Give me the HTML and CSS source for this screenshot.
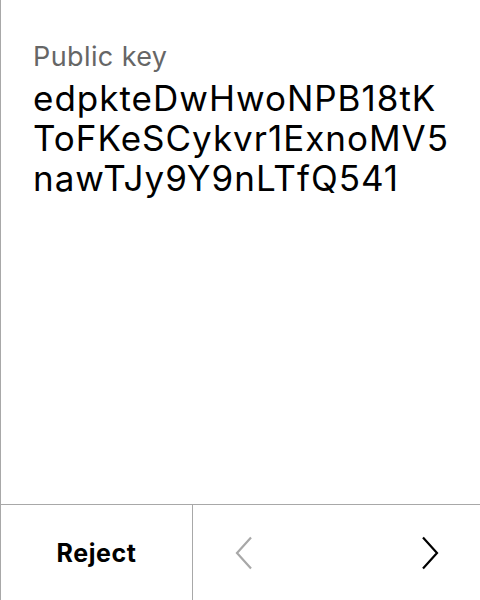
FILE: index.html
```html
<!DOCTYPE html>
<html>
<head>
<meta charset="utf-8">
<link rel="stylesheet" href="styles.css">
</head>
<body>
<div class="screen">
  <div class="content">
    <div class="label">Public key</div>
    <div class="value">edpkteDwHwoNPB18tK<br>ToFKeSCykvr1ExnoMV5<br>nawTJy9Y9nLTfQ541</div>
  </div>
  <div class="footer">
    <div class="reject">Reject</div>
    <div class="nav">
      <svg class="chev prev" width="18" height="34" viewBox="0 0 18 34"><path d="M16 1.5 L2 17 L16 32.5" fill="none" stroke="#a8a8a8" stroke-width="2.2"/></svg>
      <svg class="chev next" width="18" height="34" viewBox="0 0 18 34"><path d="M2 1.5 L16 17 L2 32.5" fill="none" stroke="#000" stroke-width="2.2"/></svg>
    </div>
  </div>
</div>
</body>
</html>
```
FILE: styles.css
```css
html, body {
  margin: 0;
  padding: 0;
  background: #fff;
}
body {
  font-family: Inter, "Noto Sans", sans-serif;
  color: #000;
}
.screen {
  width: 480px;
  height: 600px;
  box-sizing: border-box;
  border-left: 1px solid #a8a8a8;
  display: flex;
  flex-direction: column;
}
.content {
  flex: 1;
  padding: 40px 0 0 32px;
}
.label {
  font-size: 27px;
  line-height: 34px;
  letter-spacing: 0.4px;
  color: #666;
}
.value {
  margin-top: 4px;
  font-size: 35px;
  line-height: 40px;
  letter-spacing: 1px;
}
.footer {
  height: 96px;
  border-top: 1px solid #a8a8a8;
  display: flex;
  box-sizing: border-box;
}
.reject {
  width: 191px;
  border-right: 1px solid #a8a8a8;
  display: flex;
  align-items: center;
  justify-content: center;
  font-size: 25px;
  font-weight: 700;
  letter-spacing: 0.6px;
}
.nav {
  flex: 1;
  display: flex;
  align-items: center;
  justify-content: space-between;
  padding: 0 41px 0 42px;
}
.chev {
  display: block;
}
```
